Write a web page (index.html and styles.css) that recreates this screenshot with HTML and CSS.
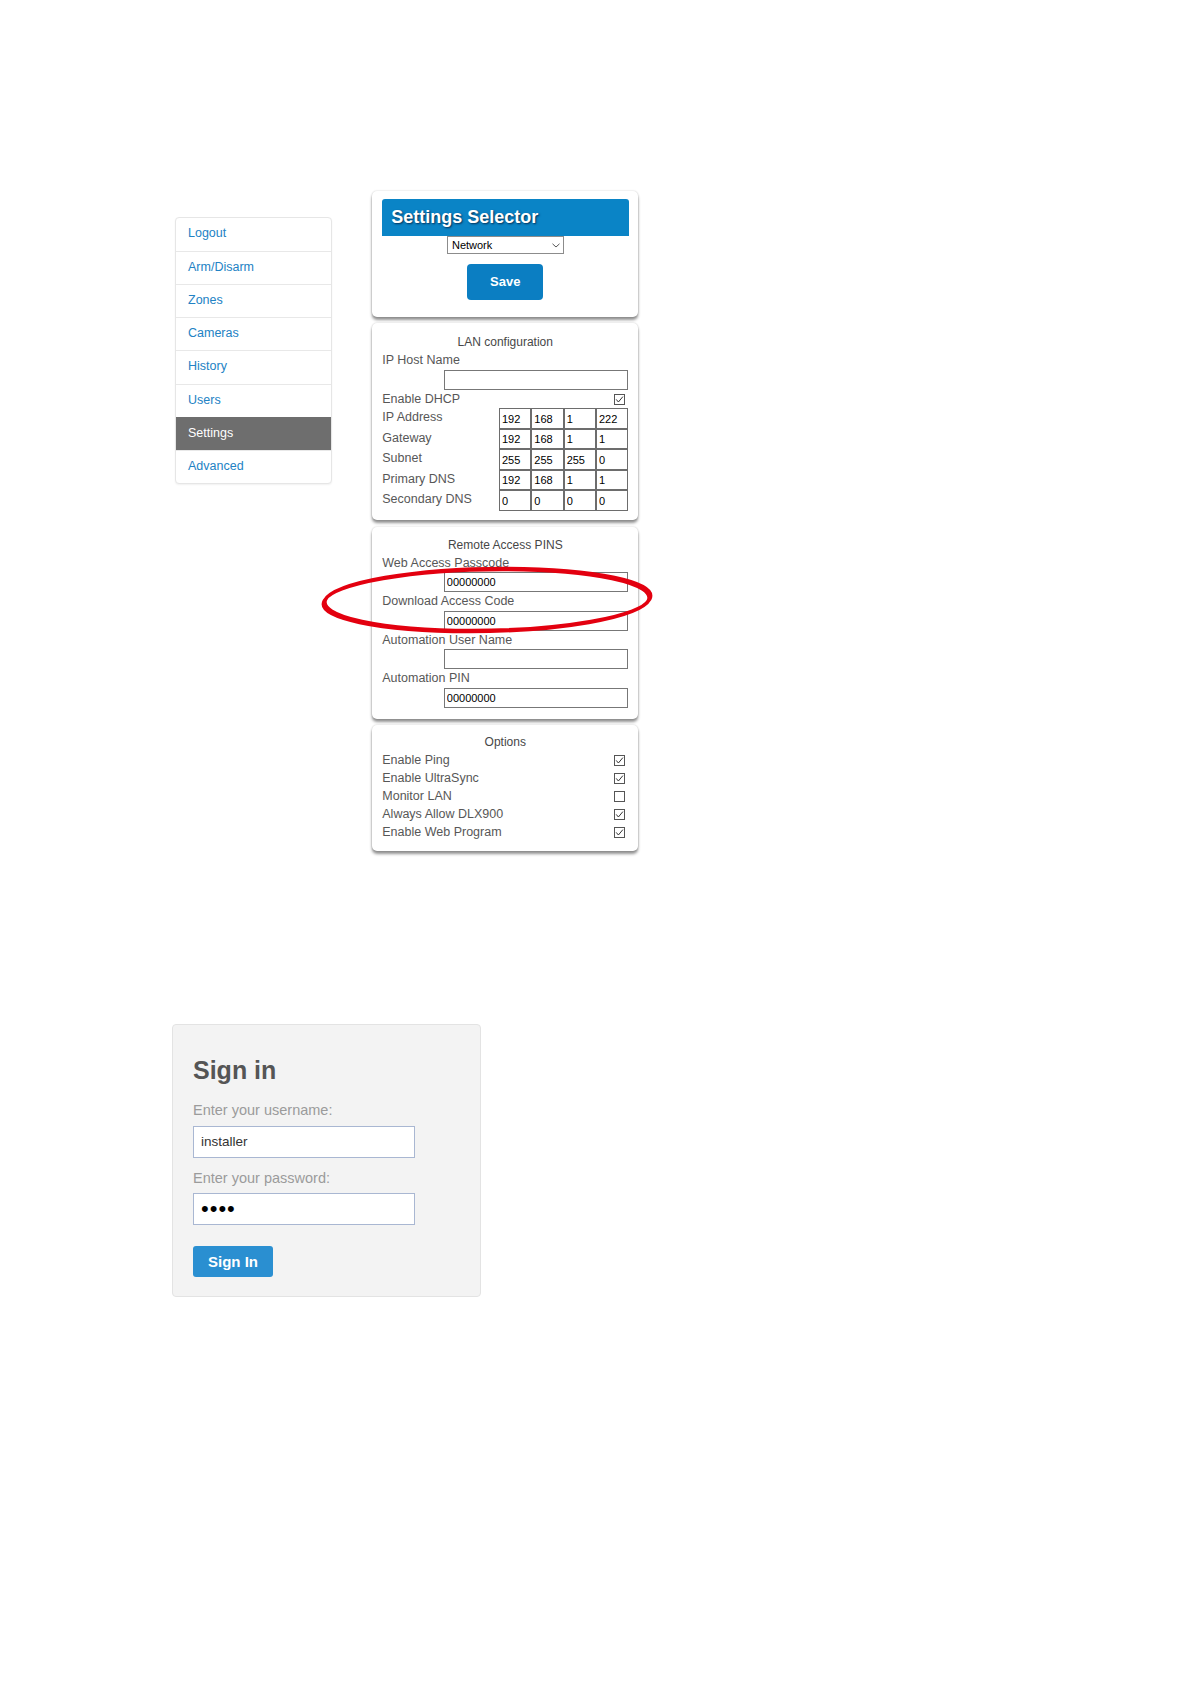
FILE: index.html
```html
<!DOCTYPE html>
<html>
<head>
<title>Network Settings</title>
<link rel="stylesheet" href="styles.css">
</head>
<body>

<div class="page">

    <div class="top">

        <ul class="nav">
            <li><a href="#">Logout</a></li>
            <li><a href="#">Arm/Disarm</a></li>
            <li><a href="#">Zones</a></li>
            <li><a href="#">Cameras</a></li>
            <li><a href="#">History</a></li>
            <li><a href="#">Users</a></li>
            <li class="active"><a href="#">Settings</a></li>
            <li><a href="#">Advanced</a></li>
        </ul>

        <div class="panels">

            <div class="panel selector">
                <div class="selector-title">Settings Selector</div>
                <div class="select-wrap">
                    <select id="settingsmenu">
                        <option>Network</option>
                    </select>
                    <svg class="chev" width="8" height="5" viewBox="0 0 8 5"><path d="M0.5 0.8 L4 4 L7.5 0.8" fill="none" stroke="#444" stroke-width="0.9"/></svg>
                </div>
                <button class="save">Save</button>
            </div>

            <div class="panel lan">
                <div class="panel-title">LAN configuration</div>
                <div class="label">IP Host Name</div>
                <input class="field" type="text" value="">
                <div class="check-row">
                    <span>Enable DHCP</span>
                    <svg class="box" viewBox="0 0 11 11"><rect x="0.5" y="0.5" width="10" height="10" fill="#fff" stroke="#555"/><path d="M2.2 5.4 L4.4 8 L8.9 2.6" fill="none" stroke="#333" stroke-width="1"/></svg>
                </div>
                <div class="ip-grid">
                    <span>IP Address</span>
                    <input value="192"><input value="168"><input value="1"><input value="222">
                    <span>Gateway</span>
                    <input value="192"><input value="168"><input value="1"><input value="1">
                    <span>Subnet</span>
                    <input value="255"><input value="255"><input value="255"><input value="0">
                    <span>Primary DNS</span>
                    <input value="192"><input value="168"><input value="1"><input value="1">
                    <span>Secondary DNS</span>
                    <input value="0"><input value="0"><input value="0"><input value="0">
                </div>
            </div>

            <div class="panel pins">
                <div class="panel-title">Remote Access PINS</div>
                <div class="label">Web Access Passcode</div>
                <input class="field" type="text" value="00000000">
                <div class="label">Download Access Code</div>
                <input class="field" type="text" value="00000000">
                <div class="label">Automation User Name</div>
                <input class="field" type="text" value="">
                <div class="label">Automation PIN</div>
                <input class="field" type="text" value="00000000">
            </div>

            <div class="panel options">
                <div class="panel-title">Options</div>
                <div class="opt-row">
                    <span>Enable Ping</span>
                    <svg class="box" viewBox="0 0 11 11"><rect x="0.5" y="0.5" width="10" height="10" fill="#fff" stroke="#555"/><path d="M2.2 5.4 L4.4 8 L8.9 2.6" fill="none" stroke="#333" stroke-width="1"/></svg>
                </div>
                <div class="opt-row">
                    <span>Enable UltraSync</span>
                    <svg class="box" viewBox="0 0 11 11"><rect x="0.5" y="0.5" width="10" height="10" fill="#fff" stroke="#555"/><path d="M2.2 5.4 L4.4 8 L8.9 2.6" fill="none" stroke="#333" stroke-width="1"/></svg>
                </div>
                <div class="opt-row">
                    <span>Monitor LAN</span>
                    <svg class="box" viewBox="0 0 11 11"><rect x="0.5" y="0.5" width="10" height="10" fill="#fff" stroke="#555"/></svg>
                </div>
                <div class="opt-row">
                    <span>Always Allow DLX900</span>
                    <svg class="box" viewBox="0 0 11 11"><rect x="0.5" y="0.5" width="10" height="10" fill="#fff" stroke="#555"/><path d="M2.2 5.4 L4.4 8 L8.9 2.6" fill="none" stroke="#333" stroke-width="1"/></svg>
                </div>
                <div class="opt-row">
                    <span>Enable Web Program</span>
                    <svg class="box" viewBox="0 0 11 11"><rect x="0.5" y="0.5" width="10" height="10" fill="#fff" stroke="#555"/><path d="M2.2 5.4 L4.4 8 L8.9 2.6" fill="none" stroke="#333" stroke-width="1"/></svg>
                </div>
            </div>

        </div>
    </div>

    <!-- red marker drawn over the access codes -->
    <svg class="mark" width="342" height="84" viewBox="0 0 342 84">
        <ellipse cx="0" cy="0" rx="162" ry="31" transform="translate(171 42) skewX(-28)" fill="none" stroke="#e3000f" stroke-width="4.5"/>
    </svg>

    <form class="signin" onsubmit="return false">
        <h2>Sign in</h2>
        <label for="username">Enter your username:</label>
        <input id="username" type="text" value="installer">
        <label for="password" class="second">Enter your password:</label>
        <input id="password" class="pass" type="password" value="1234">
        <button type="submit">Sign In</button>
    </form>

</div>

</body>
</html>
```

FILE: styles.css
```css
body {
    margin: 0;
    background-color: #fff;
    font-family: "Liberation Sans", Arial, sans-serif;
}

.page {
    position: relative;
    padding: 191px 0 0 172px;
}

.top {
    display: flex;
    align-items: flex-start;
}

/* side menu */

.nav {
    list-style: none;
    margin: 25.7px 0 0 3px;
    padding: 0;
    width: 156.7px;
    background-color: #fff;
    border: 1px solid #e6e6e6;
    border-radius: 4px;
    box-shadow: 0 1px 2px rgba(0, 0, 0, 0.06);
    box-sizing: border-box;
    overflow: hidden;
}

.nav li {
    height: 33.2px;
    border-top: 1px solid #e8e8e8;
    box-sizing: border-box;
}

.nav li:first-child {
    border-top: 0 none;
}

.nav a {
    display: block;
    padding-left: 12px;
    line-height: 31px;
    font-size: 12.5px;
    color: #2282c4;
    text-decoration: none;
}

.nav li.active {
    background-color: #6e6e6e;
    border-top-color: #6e6e6e;
}

.nav li.active a {
    color: #fff;
}

/* settings panels */

.panels {
    display: flex;
    flex-direction: column;
    gap: 6.6px;
    width: 266px;
    margin-left: 40.6px;
}

.panel {
    background-color: #fff;
    border-radius: 5px;
    box-shadow: 0 0 2px rgba(0, 0, 0, 0.2), 0 3px 3px rgba(0, 0, 0, 0.42);
    padding: 8px 10px 10px;
    font-size: 12.5px;
    color: #575757;
}

.selector {
    padding: 8px 9.5px 17px;
}

.selector-title {
    height: 36.7px;
    line-height: 37px;
    padding-left: 9.5px;
    background-color: #0a84c6;
    border-radius: 3px 3px 0 0;
    color: #fff;
    font-weight: bold;
    font-size: 18px;
    text-shadow: 1px 1px 2px rgba(0, 20, 50, 0.75);
}

.select-wrap {
    position: relative;
    width: 116.7px;
    margin: 0 auto;
}

.select-wrap select {
    display: block;
    width: 100%;
    height: 18.7px;
    margin: 0;
    padding: 0 0 0 4px;
    border: 1px solid #8c8c8c;
    border-radius: 0;
    background-color: #fff;
    appearance: none;
    -webkit-appearance: none;
    font-family: "Liberation Sans", Arial, sans-serif;
    font-size: 11px;
    color: #000;
}

.chev {
    position: absolute;
    right: 4px;
    top: 7px;
}

.save {
    display: block;
    width: 76px;
    height: 36px;
    margin: 9.3px auto 0;
    border: 0 none;
    border-radius: 4px;
    background-color: #0b7ec2;
    color: #fff;
    font-family: "Liberation Sans", Arial, sans-serif;
    font-weight: bold;
    font-size: 13px;
}

.lan {
    padding: 10px 10px 9px;
}

.pins {
    padding: 9px 10px 11px;
}

.options {
    padding: 8px 10px 10px;
}

.panel-title {
    text-align: center;
    font-size: 12px;
    line-height: 18px;
    color: #474747;
}

.label {
    line-height: 18.5px;
}

.field {
    display: block;
    width: 184px;
    height: 20px;
    margin: 0 0 0 auto;
    padding: 0 1.5px;
    box-sizing: border-box;
    border: 1px solid #777;
    font-family: "Liberation Sans", Arial, sans-serif;
    font-size: 11px;
    color: #000;
}

.check-row, .opt-row {
    display: flex;
    justify-content: space-between;
    align-items: center;
    height: 18.5px;
}

.opt-row {
    height: 18px;
}

.box {
    width: 11px;
    height: 11px;
    margin-right: 3px;
}

.ip-grid {
    display: grid;
    grid-template-columns: 1fr repeat(4, 32.33px);
    grid-auto-rows: 20.54px;
}

.ip-grid span {
    line-height: 18px;
}

.ip-grid input {
    width: 100%;
    min-width: 0;
    height: 100%;
    margin: 0;
    padding: 0 2px;
    box-sizing: border-box;
    border: 1px solid #6d6d6d;
    font-family: "Liberation Sans", Arial, sans-serif;
    font-size: 11px;
    color: #000;
}

.mark {
    position: absolute;
    left: 316px;
    top: 558px;
}

/* sign in box */

.signin {
    width: 309.4px;
    margin-top: 173px;
    padding: 30px 20px 18.3px;
    box-sizing: border-box;
    background-color: #f3f3f3;
    border: 1px solid #e3e3e3;
    border-radius: 4px;
}

.signin h2 {
    margin: 0;
    font-size: 25px;
    line-height: 30px;
    color: #555;
}

.signin label {
    display: block;
    margin-top: 16px;
    font-size: 14.5px;
    line-height: 18px;
    color: #9b9b9b;
}

.signin label.second {
    margin-top: 11px;
}

.signin input {
    display: block;
    width: 222.4px;
    height: 31.7px;
    margin-top: 6.8px;
    padding: 0 7px;
    box-sizing: border-box;
    border: 1px solid #a9b7d2;
    background-color: #fff;
    font-family: "Liberation Sans", Arial, sans-serif;
    font-size: 13.5px;
    color: #333;
}

.signin input.pass {
    font-size: 22px;
    letter-spacing: 1px;
    color: #000;
}

.signin button {
    display: block;
    width: 80px;
    height: 31.7px;
    margin-top: 20.7px;
    border: 0 none;
    border-radius: 3px;
    background-color: #2a8fd1;
    color: #fff;
    font-family: "Liberation Sans", Arial, sans-serif;
    font-weight: bold;
    font-size: 15px;
}
```
